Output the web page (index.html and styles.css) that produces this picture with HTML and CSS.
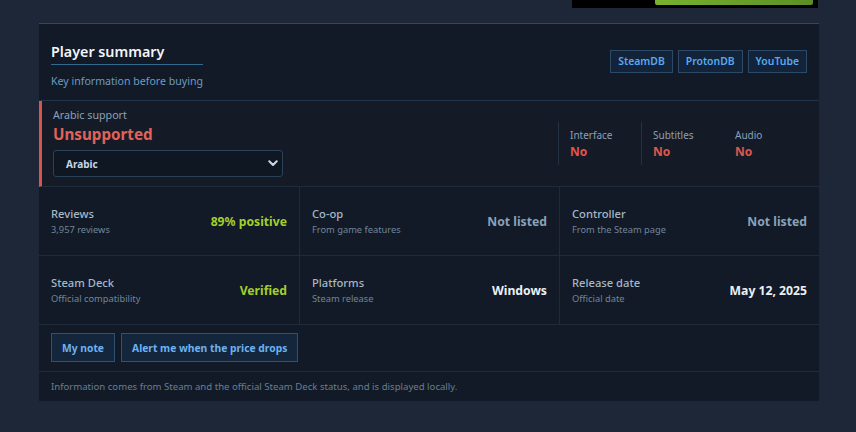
FILE: index.html
```html
<!DOCTYPE html>
<html lang="en">
<head>
<meta charset="utf-8">
<title>Player summary</title>
<link rel="stylesheet" href="styles.css">
</head>
<body>
<div class="page">
  <div class="topbar">
    <div class="buybox"><div class="buybar"></div></div>
  </div>
  <section class="card">
    <header class="card-head">
      <div class="head-text">
        <h2 class="title">Player summary</h2>
        <p class="subtitle">Key information before buying</p>
      </div>
      <nav class="links">
        <a class="link-btn">SteamDB</a>
        <a class="link-btn">ProtonDB</a>
        <a class="link-btn">YouTube</a>
      </nav>
    </header>
    <div class="lang">
      <div class="lang-main">
        <div class="lang-label">Arabic support</div>
        <div class="lang-status">Unsupported</div>
        <div class="select">
          <span>Arabic</span>
          <svg class="chev" width="10" height="7" viewBox="0 0 10 7"><path d="M1.3 1.3 L5 5 L8.7 1.3" fill="none" stroke="#c9d6e4" stroke-width="2.1" stroke-linecap="round" stroke-linejoin="round"/></svg>
        </div>
      </div>
      <div class="lang-cols">
        <div class="lang-col div"><div class="lc-label">Interface</div><div class="lc-val">No</div></div>
        <div class="lang-col div"><div class="lc-label">Subtitles</div><div class="lc-val">No</div></div>
        <div class="lang-col"><div class="lc-label">Audio</div><div class="lc-val">No</div></div>
      </div>
    </div>
    <div class="grid">
      <div class="cell"><div class="ct"><div class="c-title">Reviews</div><div class="c-sub">3,957 reviews</div></div><div class="c-val green">89% positive</div></div>
      <div class="cell"><div class="ct"><div class="c-title">Co-op</div><div class="c-sub">From game features</div></div><div class="c-val muted">Not listed</div></div>
      <div class="cell"><div class="ct"><div class="c-title">Controller</div><div class="c-sub">From the Steam page</div></div><div class="c-val muted">Not listed</div></div>
      <div class="cell"><div class="ct"><div class="c-title">Steam Deck</div><div class="c-sub">Official compatibility</div></div><div class="c-val green">Verified</div></div>
      <div class="cell"><div class="ct"><div class="c-title">Platforms</div><div class="c-sub">Steam release</div></div><div class="c-val white">Windows</div></div>
      <div class="cell"><div class="ct"><div class="c-title">Release date</div><div class="c-sub">Official date</div></div><div class="c-val white">May 12, 2025</div></div>
    </div>
    <div class="actions">
      <button class="act-btn">My note</button>
      <button class="act-btn">Alert me when the price drops</button>
    </div>
    <footer class="foot">Information comes from Steam and the official Steam Deck status, and is displayed locally.</footer>
  </section>
</div>
</body>
</html>
```
FILE: styles.css
```css
* { box-sizing: border-box; }
html, body { margin: 0; padding: 0; }
body {
  background: #1d2737;
  font-family: "Noto Sans", "DejaVu Sans", sans-serif;
  color: #c9d6e4;
  height: 432px;
  overflow: hidden;
}
.page { width: 780px; margin-left: 39px; }
.topbar { display: flex; justify-content: flex-end; height: 23px; padding-right: 1px; }
.buybox {
  width: 246px; height: 8px; background: #000;
  display: flex; justify-content: flex-end; padding-right: 5px;
}
.buybar {
  width: 158px; height: 5px;
  background: linear-gradient(90deg, #78b22e, #5b8f25);
  border-radius: 0 0 2px 2px;
}
.card {
  background: #111a26;
  border-top: 1px solid #2b4a66;
}
.card-head {
  display: flex; justify-content: space-between; align-items: center;
  padding: 18px 12px 11px 12px;
  border-bottom: 1px solid #22344a;
}
.head-text { display: flex; flex-direction: column; }
.title {
  margin: 0; font-size: 14.3px; line-height: 20px; font-weight: 600; color: #f1f5f9;
  padding-bottom: 2px; border-bottom: 1px solid #2e6a90;
}
.subtitle { margin: 8px 0 0; font-size: 10.6px; line-height: 16px; color: #6d9bc3; }
.links { display: flex; gap: 5px; margin-bottom: 8px; }
.link-btn {
  display: block; height: 23px; line-height: 21px; padding: 0 7px;
  border: 1px solid #2c4a65; background: #13233a;
  color: #5aa9ee; font-size: 10.4px; font-weight: 600;
}
.lang {
  display: flex; justify-content: space-between; align-items: center;
  background: #141b27;
  border-left: 3px solid #d9544a;
  border-bottom: 1px solid #1f2b3a;
  padding: 8px 12px 9px 11px;
}
.lang-label { font-size: 10.7px; line-height: 13px; color: #8ba0b8; }
.lang-status { margin-top: 2px; font-size: 15.2px; line-height: 20px; font-weight: 700; color: #e0625a; }
.select {
  margin-top: 6px; width: 230px; height: 27px;
  display: flex; justify-content: space-between; align-items: center;
  border: 1px solid #2c4156; border-radius: 3px; background: #0f1723;
  padding: 0 4px 0 12px;
  font-size: 10px; font-weight: 700; color: #c7d5e6;
}
.lang-cols { display: flex; }
.lang-col { width: 83px; padding: 6px 0 6px 11px; }
.lang-col.div { border-left: 1px solid #243142; }
.lc-label { font-size: 10px; line-height: 14px; color: #8ba0b8; }
.lc-val { margin-top: 3px; font-size: 12px; line-height: 14px; font-weight: 700; color: #e0564c; }
.grid { display: grid; grid-template-columns: repeat(3, 1fr); }
.cell {
  height: 69px; display: flex; justify-content: space-between; align-items: center;
  padding: 0 12px; border-bottom: 1px solid #1f2b3a; border-left: 1px solid #1f2b3a;
}
.cell:nth-child(3n+1) { border-left: none; }
.c-title { font-size: 11.2px; line-height: 15px; color: #a7b7c8; font-weight: 500; }
.c-sub { margin-top: 2px; font-size: 9.3px; line-height: 13px; color: #73859a; }
.c-val { font-size: 12.2px; font-weight: 700; }
.green { color: #a2d02b; }
.muted { color: #8ca1b6; }
.white { color: #eaf0f6; }
.actions {
  display: flex; gap: 6px; padding: 8px 12px 9px;
  border-bottom: 1px solid #1f2b3a;
}
.act-btn {
  height: 29px; padding: 0 10px;
  border: 1px solid #2d5275; background: #14263b;
  color: #6cb2f2; font-family: inherit; font-size: 10.3px; font-weight: 700;
}
.foot { padding: 8px 12px; font-size: 9.6px; line-height: 13px; color: #6c7d90; }
```
